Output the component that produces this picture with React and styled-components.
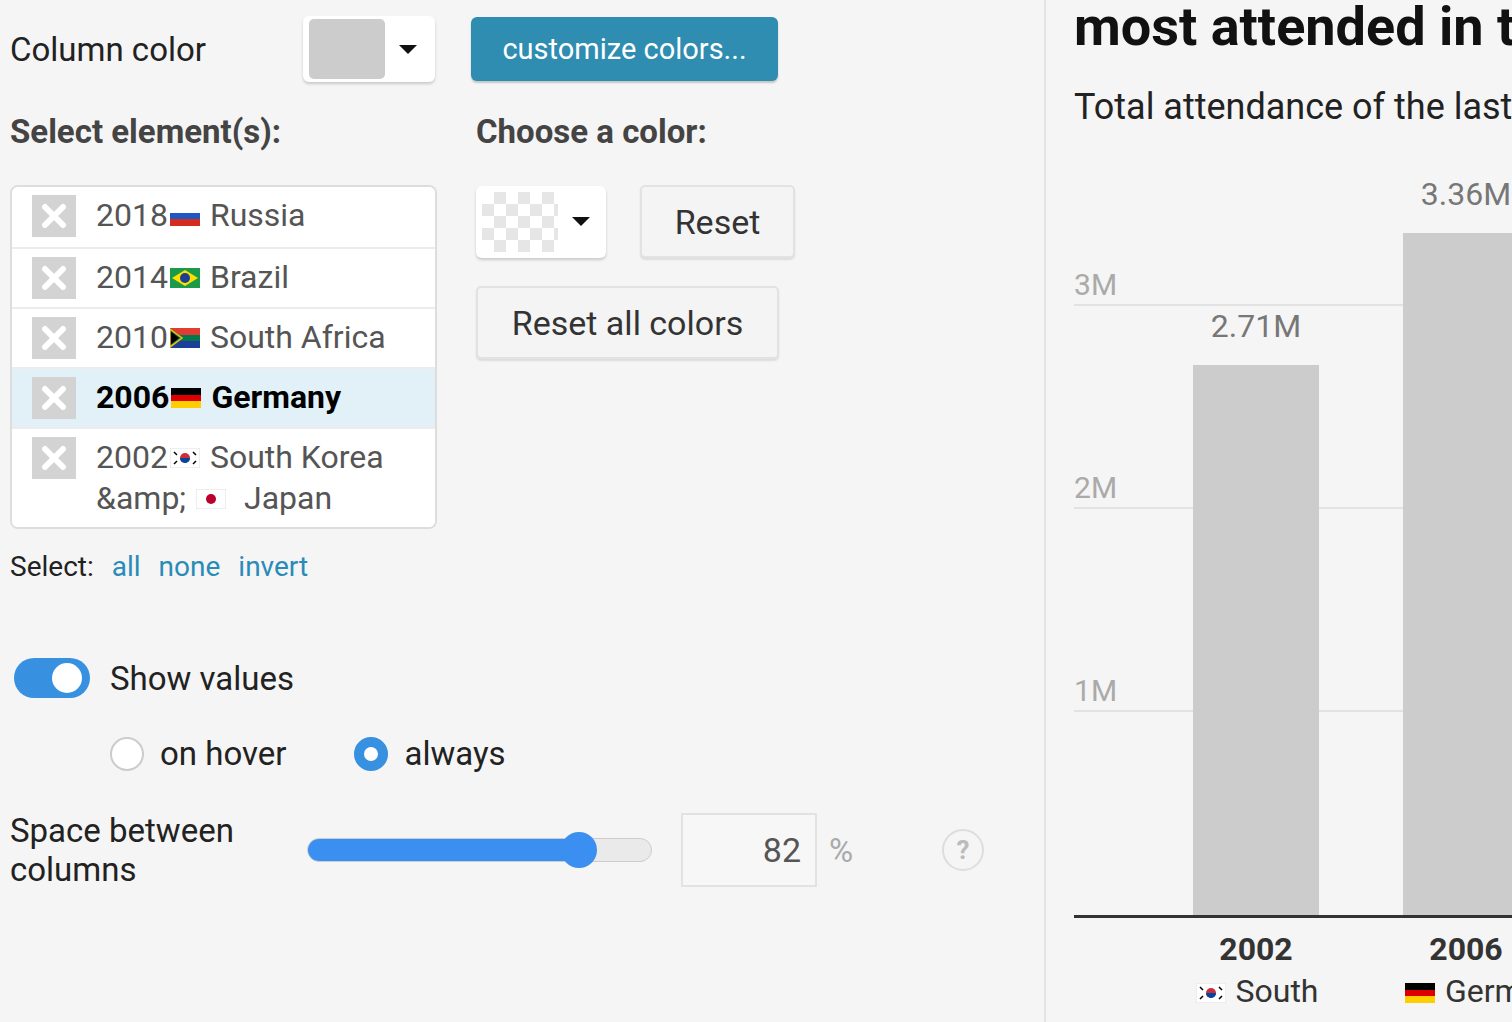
import React from "react";
import styled, { createGlobalStyle } from "styled-components";

const Global = createGlobalStyle`
  html, body { margin: 0; padding: 0; background: #f5f5f5; overflow: hidden; }
  * { box-sizing: border-box; }
  body { font-family: Roboto, "Noto Sans", sans-serif; }
`;

const Page = styled.div`
  display: flex; width: 1512px; height: 1022px; overflow: hidden;
`;
const Left = styled.div`
  width: 1046px; flex-shrink: 0; padding: 16px 0 0 10px;
  border-right: 2px solid #e4e4e4; display: flex; flex-direction: column;
`;
const Right = styled.div`
  flex: 1; padding-left: 28px; overflow: hidden; display: flex; flex-direction: column;
`;
const Row = styled.div`
  display: flex; align-items: ${p => p.$align || "center"}; gap: ${p => p.$gap || 0}px;
  margin-top: ${p => p.$mt || 0}px;
`;
const Label = styled.div`
  font-size: 33px; color: ${p => p.$c || "#222"}; width: ${p => p.$w ? p.$w + "px" : "auto"};
  line-height: 39px; font-weight: ${p => p.$bold ? 700 : 400};
`;
const Dropdown = styled.div`
  width: 132px; height: 66px; background: #fff; border-radius: 6px;
  box-shadow: 0 2px 3px rgba(0,0,0,0.18); display: flex; align-items: center;
  padding: 0 0 0 6px; gap: 14px;
`;
const Swatch = styled.div`
  width: 76px; height: 60px; border-radius: 5px; background: #cccccc;
`;
const Checker = styled.div`
  width: 76px; height: 60px;
  background-color: #fff;
  background-image: linear-gradient(45deg,#e6e6e6 25%,transparent 25%,transparent 75%,#e6e6e6 75%),
    linear-gradient(45deg,#e6e6e6 25%,transparent 25%,transparent 75%,#e6e6e6 75%);
  background-size: 24px 24px; background-position: 0 0, 12px 12px;
`;
const Caret = styled.div`
  width: 0; height: 0; border-left: 9px solid transparent; border-right: 9px solid transparent;
  border-top: 9px solid #111;
`;
const BlueButton = styled.button`
  width: 307px; height: 64px; background: #2e8db0; color: #fff; border: none;
  border-radius: 6px; font: 400 29px Roboto, sans-serif; box-shadow: 0 2px 2px rgba(0,0,0,0.2);
`;
const GreyButton = styled.button`
  width: ${p => p.$w}px; height: 73px; background: #f4f4f4; color: #333;
  border: 2px solid #e2e2e2; border-radius: 5px; font: 400 34px Roboto, sans-serif;
  box-shadow: 0 2px 2px rgba(0,0,0,0.1);
`;
const Columns = styled.div`
  display: flex; margin-top: 30px;
`;
const ColA = styled.div` width: 466px; display: flex; flex-direction: column; `;
const ColB = styled.div` display: flex; flex-direction: column; `;
const List = styled.div`
  margin-top: 34px; width: 427px; border: 2px solid #ddd; border-radius: 8px;
  background: #fff; overflow: hidden;
`;
const Item = styled.div`
  display: flex; align-items: flex-start; gap: 20px; padding: 8px 0 8px 20px;
  background: ${p => p.$sel ? "#e2f0f7" : "#fff"};
  border-top: ${p => p.$first ? "none" : "2px solid #ececec"};
  min-height: 60px;
`;
const Box = styled.div`
  width: 44px; height: 42px; background: #d3d3d3; flex-shrink: 0;
  display: flex; align-items: center; justify-content: center;
`;
const ItemText = styled.div`
  font-size: 32px; line-height: 41px; margin-top: 0;
  color: ${p => p.$sel ? "#000" : "#555"}; font-weight: ${p => p.$sel ? 700 : 400};
`;
const FlagWrap = styled.span` display: inline-block; vertical-align: middle; margin: -4px 10px 0 2px; `;
const Links = styled.div`
  display: flex; gap: 18px; font-size: 28px; margin-top: 18px; align-items: baseline;
`;
const Link = styled.span` color: #2a8bb8; `;
const Toggle = styled.div`
  width: 76px; height: 40px; border-radius: 20px; background: #3790e0; position: relative;
  &::after { content: ""; position: absolute; right: 8px; top: 5px; width: 30px; height: 30px;
    border-radius: 50%; background: #fff; }
`;
const Radio = styled.div`
  width: 34px; height: 34px; border-radius: 50%;
  border: ${p => p.$on ? "10px solid #3790e0" : "2px solid #ccc"}; background: #fff;
`;
const SliderTrack = styled.div`
  width: 345px; height: 24px; border-radius: 12px; background: #eaeaea;
  border: 1px solid #ccc; position: relative;
`;
const SliderFill = styled.div`
  height: 100%; border-radius: 12px; background: #3a8ff0;
`;
const Thumb = styled.div`
  position: absolute; top: -7px; width: 36px; height: 36px; border-radius: 50%;
  background: #3a8ff0; margin-left: -18px;
`;
const NumBox = styled.div`
  width: 136px; height: 74px; border: 2px solid #e2e2e2; background: #f7f7f7;
  font-size: 34px; color: #555; display: flex; align-items: center; justify-content: flex-end;
  padding-right: 14px;
`;
const Help = styled.div`
  width: 42px; height: 42px; border-radius: 50%; border: 2px solid #ddd; color: #bbb;
  display: flex; align-items: center; justify-content: center; font-size: 26px; font-weight: 700;
`;
const Title = styled.div`
  font-size: 54px; font-weight: 700; color: #111; white-space: nowrap; line-height: 54px; margin-top: 0;
`;
const Sub = styled.div`
  font-size: 36px; color: #222; white-space: nowrap; margin-top: 32px;
`;
const Chart = styled.div`
  position: relative; height: 732px; margin-top: 58px; border-bottom: 3px solid #333;
  display: flex; align-items: flex-end; gap: 84px; padding-left: 119px; width: 600px; flex-shrink: 0;
`;
const Grid = styled.div`
  position: absolute; left: 0; right: 0; border-top: 2px solid #e2e2e2;
`;
const Tick = styled.div`
  position: absolute; left: 0; font-size: 30px; color: #aaa;
`;
const Bar = styled.div`
  width: 126px; flex-shrink: 0; background: #cccccc; position: relative;
`;
const BarValue = styled.div`
  position: absolute; left: 0; right: 0; top: -58px; text-align: center; font-size: 32px; color: #777; white-space: nowrap;
`;
const XLabels = styled.div`
  display: flex; gap: 84px; padding-left: 119px; margin-top: 12px; width: 700px;
`;
const XLabel = styled.div`
  width: 126px; flex-shrink: 0; text-align: center;
`;
const Year = styled.div` font-size: 32px; font-weight: 700; color: #333; `;
const Country = styled.div` font-size: 32px; color: #333; margin-top: 4px; white-space: nowrap; `;

const Flag = ({ c }) => {
  const w = 30, h = 20;
  if (c === "ru") return <svg width={w} height={h}><rect width="30" height="7" fill="#fff"/><rect y="7" width="30" height="6" fill="#1c57c2"/><rect y="13" width="30" height="7" fill="#d52b1e"/></svg>;
  if (c === "br") return <svg width={w} height={h}><rect width="30" height="20" fill="#1b9a4a"/><polygon points="15,2 28,10 15,18 2,10" fill="#fedf00"/><circle cx="15" cy="10" r="5" fill="#1c3f94"/></svg>;
  if (c === "za") return <svg width={w} height={h}><rect width="30" height="10" fill="#e03c31"/><rect y="10" width="30" height="10" fill="#1d3f99"/><polygon points="0,0 14,10 0,20" fill="#007a4d"/><rect y="7" width="30" height="6" fill="#007a4d"/><polygon points="0,3 9,10 0,17" fill="#000"/><polygon points="0,1 12,10 0,19" fill="none" stroke="#ffb612" strokeWidth="1.5"/></svg>;
  if (c === "de") return <svg width={w} height={h}><rect width="30" height="7" fill="#000"/><rect y="7" width="30" height="6" fill="#dd0000"/><rect y="13" width="30" height="7" fill="#ffce00"/></svg>;
  if (c === "kr") return <svg width={w} height={h}><rect width="30" height="20" fill="#fff" stroke="#ddd"/><circle cx="15" cy="10" r="5" fill="#cd2e3a"/><path d="M10 10 a5 5 0 0 0 10 0z" fill="#0047a0"/><g stroke="#000" strokeWidth="1.5"><path d="M4 4l3 3M23 4l3 3M4 16l3-3M23 16l3-3"/></g></svg>;
  return <svg width={w} height={h}><rect width="30" height="20" fill="#fff" stroke="#ddd"/><circle cx="15" cy="10" r="5" fill="#bc002d"/></svg>;
};

const XMark = () => (
  <svg width="26" height="26" viewBox="0 0 26 26"><path d="M4 4L22 22M22 4L4 22" stroke="#fff" strokeWidth="6" strokeLinecap="round"/></svg>
);

const items = [
  { y: "2018", f: "ru", n: "Russia" },
  { y: "2014", f: "br", n: "Brazil" },
  { y: "2010", f: "za", n: "South Africa" },
  { y: "2006", f: "de", n: "Germany", sel: true },
  { y: "2002", f: "kr", n: "South Korea", extra: true },
];

const PX = 203;

export default function App() {
  return (
    <Page>
      <Global />
      <Left>
        <Row>
          <Label $w={293}>Column color</Label>
          <Dropdown><Swatch /><Caret /></Dropdown>
          <div style={{ width: 36 }} />
          <BlueButton>customize colors...</BlueButton>
        </Row>
        <Columns>
          <ColA>
            <Label $bold $c="#444">Select element(s):</Label>
            <List>
              {items.map((it, i) => (
                <Item key={it.y} $sel={it.sel} $first={i === 0}>
                  <Box><XMark /></Box>
                  <ItemText $sel={it.sel}>
                    {it.y}<FlagWrap><Flag c={it.f} /></FlagWrap>{it.n}
                    {it.extra && <><br />&amp;amp; <FlagWrap><Flag c="jp" /></FlagWrap> Japan</>}
                  </ItemText>
                </Item>
              ))}
            </List>
            <Links>
              <Label style={{ fontSize: 28 }}>Select:</Label>
              <Link>all</Link><Link>none</Link><Link>invert</Link>
            </Links>
          </ColA>
          <ColB>
            <Label $bold $c="#444">Choose a color:</Label>
            <Row $mt={34} $gap={34}>
              <Dropdown style={{ width: 130, height: 72 }}><Checker /><Caret /></Dropdown>
              <GreyButton $w={155}>Reset</GreyButton>
            </Row>
            <Row $mt={28}><GreyButton $w={303}>Reset all colors</GreyButton></Row>
          </ColB>
        </Columns>
        <Row $mt={72} $gap={20} style={{ paddingLeft: 4 }}>
          <Toggle /><Label>Show values</Label>
        </Row>
        <Row $mt={36} $gap={16} style={{ paddingLeft: 100 }}>
          <Radio /><Label>on hover</Label>
          <div style={{ width: 36 }} />
          <Radio $on /><Label>always</Label>
        </Row>
        <Row $mt={38}>
          <Label $w={297}>Space between<br />columns</Label>
          <SliderTrack>
            <SliderFill style={{ width: "79%" }} />
            <Thumb style={{ left: "79%" }} />
          </SliderTrack>
          <div style={{ width: 29 }} />
          <NumBox>82</NumBox>
          <Label $c="#aaa" style={{ marginLeft: 12, width: 113 }}>%</Label>
          <Help>?</Help>
        </Row>
      </Left>
      <Right>
        <Title>most attended in the last</Title>
        <Sub>Total attendance of the last World Cups</Sub>
        <Chart>
          {[1, 2, 3].map(m => (
            <React.Fragment key={m}>
              <Grid style={{ bottom: m * PX }} />
              <Tick style={{ bottom: m * PX + 4 }}>{m}M</Tick>
            </React.Fragment>
          ))}
          <Bar style={{ height: 2.71 * PX }}><BarValue>2.71M</BarValue></Bar>
          <Bar style={{ height: 3.36 * PX }}><BarValue>3.36M</BarValue></Bar>
        </Chart>
        <XLabels>
          <XLabel><Year>2002</Year><Country><FlagWrap><Flag c="kr" /></FlagWrap>South</Country></XLabel>
          <XLabel><Year>2006</Year><Country><FlagWrap><Flag c="de" /></FlagWrap>Germany</Country></XLabel>
        </XLabels>
      </Right>
    </Page>
  );
}
